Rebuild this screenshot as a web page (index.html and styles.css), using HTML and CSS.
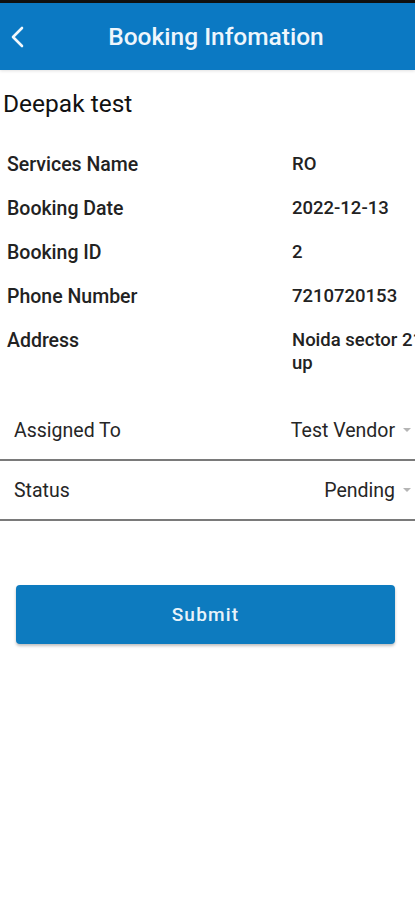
FILE: index.html
```html
<!DOCTYPE html>
<html>
<head>
<meta charset="utf-8">
<link rel="stylesheet" href="styles.css">
</head>
<body>
<div class="page">
  <div class="statusbar"></div>
  <header class="appbar">
    <svg class="back" width="16" height="24" viewBox="0 0 16 24"><polyline points="12,2 3,11 12,20" fill="none" stroke="#f2f8fc" stroke-width="2.6" stroke-linecap="round" stroke-linejoin="round"/></svg>
    <h1 class="title">Booking Infomation</h1>
  </header>
  <main class="content">
    <h2 class="name">Deepak test</h2>
    <div class="details">
      <div class="row"><span class="label">Services Name</span><span class="value">RO</span></div>
      <div class="row"><span class="label">Booking Date</span><span class="value">2022-12-13</span></div>
      <div class="row"><span class="label">Booking ID</span><span class="value">2</span></div>
      <div class="row"><span class="label">Phone Number</span><span class="value">7210720153</span></div>
      <div class="row"><span class="label">Address</span><span class="value">Noida sector 21 up</span></div>
    </div>
    <div class="selects">
      <div class="select"><span class="sel-label">Assigned To</span><span class="sel-value">Test Vendor<span class="caret"></span></span></div>
      <div class="select"><span class="sel-label">Status</span><span class="sel-value">Pending<span class="caret"></span></span></div>
    </div>
    <div class="actions">
      <button class="submit">Submit</button>
    </div>
  </main>
</div>
</body>
</html>
```

FILE: styles.css
```css
html, body { margin: 0; padding: 0; background: #fff; }
body { font-family: Roboto, "Liberation Sans", sans-serif; color: #111; }
.page { width: 415px; height: 900px; overflow: hidden; }
.statusbar { height: 3px; background: #111; }
.appbar {
  height: 67px; background: #0b79c3; display: flex; align-items: center;
  position: relative; box-shadow: 0 1px 3px rgba(0,0,0,0.12);
}
.back { position: absolute; left: 10px; top: 23px; }
.title { flex: 1; margin: 0; text-align: center; font-size: 24.5px; font-weight: 500; color: #eef6fc; padding-left: 17px; }
.content { padding-top: 19px; }
.name { margin: 0 0 0 3px; font-size: 24.5px; font-weight: 400; color: #111; line-height: 30px; }
.details { padding-top: 34px; }
.row { display: flex; min-height: 44px; font-size: 19.5px; font-weight: 500; color: #222; line-height: 23px; }
.row:last-child { min-height: 72px; }
.label { width: 285px; padding-left: 7px; flex-shrink: 0; }
.value { width: 140px; flex-shrink: 0; font-size: 18.5px; }
.select {
  display: flex; justify-content: space-between; align-items: center;
  height: 58px; border-bottom: 2px solid #7a7a7a; padding: 0 4px 0 14px;
  font-size: 19.5px; color: #262626;
}
.sel-value { display: flex; align-items: center; }
.caret { width: 0; height: 0; border-left: 4.5px solid transparent; border-right: 4.5px solid transparent; border-top: 4.5px solid #b5b5b5; margin-left: 8px; }
.actions { padding: 64px 20px 0 16px; }
.submit {
  display: block; width: 100%; height: 59px; border: none; border-radius: 4px;
  background: #0d7bbf; color: #e8f3fa; font-family: Roboto, sans-serif; font-size: 19px; font-weight: 500; letter-spacing: 1.2px;
  box-shadow: 0 2px 3px rgba(0,0,0,0.25);
}
```
